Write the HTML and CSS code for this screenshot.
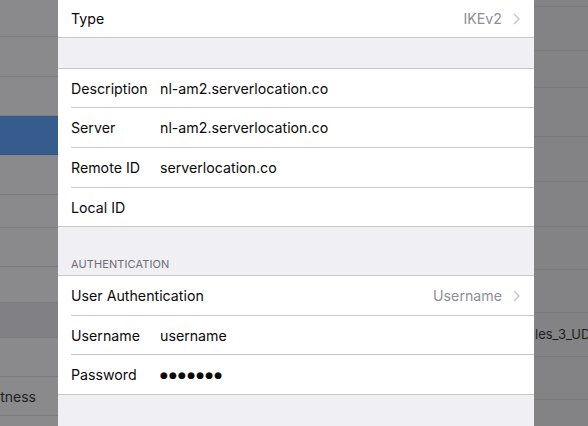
FILE: index.html
```html
<!DOCTYPE html>
<html lang="en">
<head>
<meta charset="utf-8">
<title>VPN Configuration</title>
<link rel="stylesheet" href="styles.css">
</head>
<body>
<div class="screen">
  <aside class="pane pane-left">
    <div class="bg-row" style="height:37px"></div>
    <div class="bg-row" style="height:40px"></div>
    <div class="bg-row" style="height:39px"></div>
    <div class="bg-row bg-selected" style="height:39px"></div>
    <div class="bg-row" style="height:40px"></div>
    <div class="bg-row" style="height:33px"></div>
    <div class="bg-row" style="height:39px"></div>
    <div class="bg-row" style="height:36px"></div>
    <div class="bg-row bg-section" style="height:35px"></div>
    <div class="bg-row" style="height:39px"></div>
    <div class="bg-row bg-text-end" style="height:39px"><span>Display &amp; Brightness</span></div>
    <div class="bg-row" style="height:39px"></div>
  </aside>

  <main class="sheet">
    <section class="group group-first">
      <div class="cell">
        <div class="cell-inner">
          <span class="label">Type</span>
          <span class="detail">IKEv2</span>
          <svg class="chevron" viewBox="0 0 7 12" width="7" height="12"><polyline points="1,1 6,6 1,11" fill="none" stroke="#c7c7cc" stroke-width="1.5"/></svg>
        </div>
      </div>
    </section>

    <div class="gap gap-plain"></div>

    <section class="group">
      <div class="cell h39">
        <div class="cell-inner"><span class="label">Description</span><span class="value">nl-am2.serverlocation.co</span></div>
      </div>
      <div class="cell h40">
        <div class="cell-inner"><span class="label">Server</span><span class="value">nl-am2.serverlocation.co</span></div>
      </div>
      <div class="cell h40">
        <div class="cell-inner"><span class="label">Remote ID</span><span class="value">serverlocation.co</span></div>
      </div>
      <div class="cell h38">
        <div class="cell-inner"><span class="label">Local ID</span><span class="value"></span></div>
      </div>
    </section>

    <div class="gap gap-header"><span class="header">Authentication</span></div>

    <section class="group">
      <div class="cell h40">
        <div class="cell-inner">
          <span class="label">User Authentication</span>
          <span class="detail">Username</span>
          <svg class="chevron" viewBox="0 0 7 12" width="7" height="12"><polyline points="1,1 6,6 1,11" fill="none" stroke="#c7c7cc" stroke-width="1.5"/></svg>
        </div>
      </div>
      <div class="cell h39">
        <div class="cell-inner"><span class="label">Username</span><span class="value">username</span></div>
      </div>
      <div class="cell h39">
        <div class="cell-inner"><span class="label">Password</span><span class="value dots">●●●●●●●</span></div>
      </div>
    </section>

    <div class="gap gap-bottom"></div>
  </main>

  <aside class="pane pane-right">
    <div class="bg-row" style="height:7px"></div>
    <div class="bg-row" style="height:44px"></div>
    <div class="bg-row" style="height:37px"></div>
    <div class="bg-row" style="height:49px"></div>
    <div class="bg-row" style="height:45px"></div>
    <div class="bg-row" style="height:45px"></div>
    <div class="bg-row" style="height:43px"></div>
    <div class="bg-row" style="height:43px"></div>
    <div class="bg-row bg-text-start" style="height:44px"><span>les_3_UDP</span></div>
    <div class="bg-row" style="height:43px"></div>
  </aside>
</div>
</body>
</html>
```

FILE: styles.css
```css
* { box-sizing: border-box; }

html, body {
  margin: 0;
  padding: 0;
  width: 588px;
  height: 426px;
  overflow: hidden;
  background: #86868a;
  font-family: Inter, "Noto Sans", "Liberation Sans", sans-serif;
  -webkit-font-smoothing: antialiased;
}

.screen {
  display: flex;
  width: 588px;
  height: 426px;
  overflow: hidden;
}

/* dimmed background panes */
.pane {
  display: flex;
  flex-direction: column;
  overflow: hidden;
  flex: none;
}

.pane-left {
  width: 58px;
  background: #8a8a8d;
}

.pane-right {
  width: 54px;
  background: #838386;
}

.bg-row {
  flex: none;
  border-bottom: 1px solid #7d7d81;
  display: flex;
  align-items: center;
  font-size: 14px;
  color: #1d1d1f;
  white-space: nowrap;
  overflow: hidden;
}

.pane-right .bg-row {
  border-bottom-color: #7a7a7d;
}

.bg-selected {
  background: #355c8c;
  border-bottom-color: #2f5280;
}

.bg-section {
  background: #818185;
}

.bg-text-end {
  justify-content: flex-end;
  padding-right: 22px;
}

.bg-text-start {
  padding-left: 1px;
  padding-bottom: 2px;
  font-size: 13px;
}

/* modal sheet */
.sheet {
  width: 476px;
  flex: none;
  background: #efeff4;
  display: flex;
  flex-direction: column;
}

.group {
  background: #ffffff;
  border-top: 1px solid #c8c7cc;
  border-bottom: 1px solid #c8c7cc;
}

.group-first {
  border-top: none;
}

.cell {
  padding-left: 13px;
  height: 37px;
  display: flex;
}

.h38 { height: 38px; }
.h39 { height: 39px; }
.h40 { height: 40px; }

.cell-inner {
  flex: 1;
  display: flex;
  align-items: center;
  padding-right: 14px;
  border-bottom: 1px solid #c8c7cc;
}

.cell:last-child .cell-inner {
  border-bottom: none;
}

.label {
  width: 89px;
  flex: none;
  font-size: 14.2px;
  color: #0a0a0a;
  white-space: nowrap;
}

.value {
  flex: 1;
  font-size: 14.2px;
  color: #0a0a0a;
  white-space: nowrap;
}

.dots {
  font-size: 9px;
  letter-spacing: 1.2px;
  font-family: "DejaVu Sans", sans-serif;
}

.detail {
  margin-left: auto;
  font-size: 14.2px;
  color: #8e8e93;
  white-space: nowrap;
}

.chevron {
  margin-left: 11px;
  flex: none;
}

.gap {
  flex: none;
  display: flex;
  align-items: flex-end;
  padding-left: 13px;
}

.gap-plain { height: 30px; }

.gap-header {
  height: 48px;
  padding-bottom: 4px;
}

.gap-bottom {
  flex: 1;
}

.header {
  font-size: 11px;
  text-transform: uppercase;
  color: #6d6d72;
  letter-spacing: 0.1px;
}
```
